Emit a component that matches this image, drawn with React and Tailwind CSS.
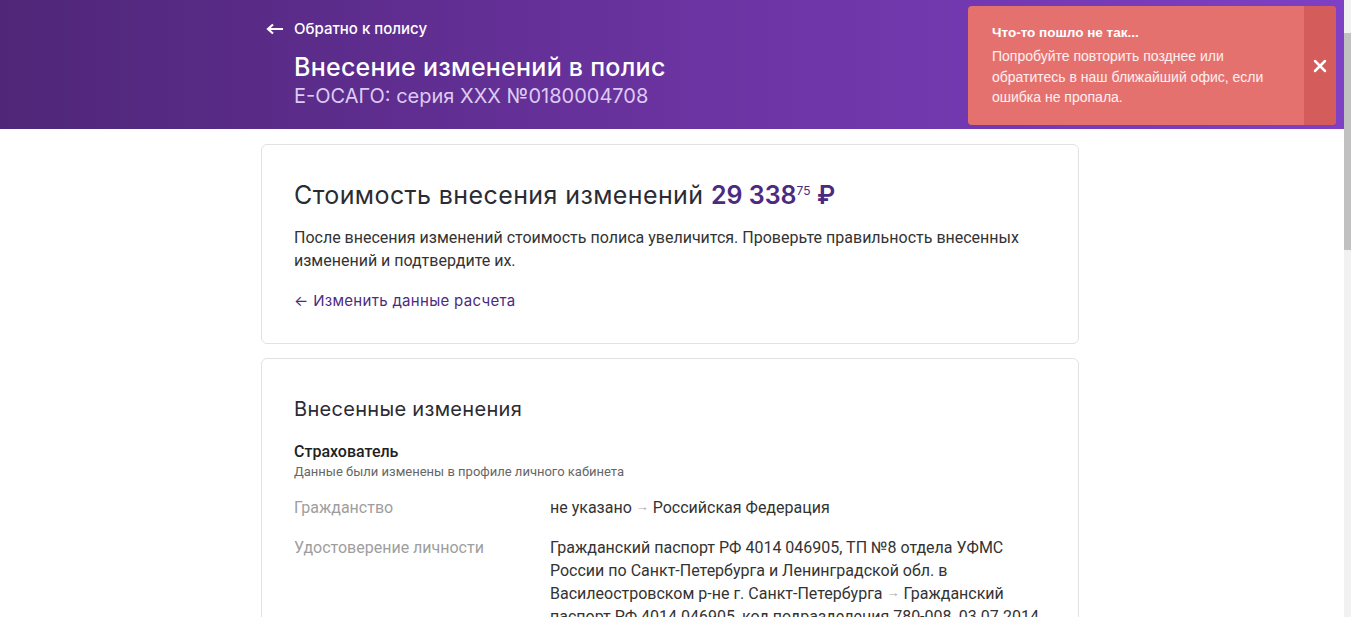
import { X } from "lucide-react";

const heading = { fontFamily: "Inter, 'Noto Sans', sans-serif" };

function Toast() {
  return (
    <div
      className="absolute top-[6px] right-[8px] w-[368px] h-[119px] flex rounded-[4px] overflow-hidden bg-[#e5716f] text-white"
      style={{ fontFamily: "'Liberation Sans', Arial, sans-serif" }}
    >
      <div className="flex-1 pl-[24px] pr-[22px] pt-[18px]">
        <p className="text-[13.5px] font-bold leading-[18px]">Что-то пошло не так...</p>
        <p className="mt-[4px] text-[14px] leading-[20.5px] text-white/90">
          Попробуйте повторить позднее или обратитесь в наш ближайший офис, если ошибка не пропала.
        </p>
      </div>
      <button className="w-[32px] bg-[#d45c5a] flex items-center justify-center">
        <X size={20} strokeWidth={3} />
      </button>
    </div>
  );
}

function Row({ label, children, top = "mt-[17px]" }) {
  return (
    <div className={`flex text-[16px] leading-[23px] ${top}`}>
      <div className="w-[256px] shrink-0 text-[#9e9e9e]">{label}</div>
      <div className="flex-1 text-[#333]">{children}</div>
    </div>
  );
}

const Arrow = () => (
  <span className="relative -top-[2px] text-[#a8a8a8] text-[13px] leading-none">→</span>
);

export default function App() {
  return (
    <div className="flex h-[617px] overflow-hidden bg-white" style={{ fontFamily: "Roboto, sans-serif" }}>
      <div className="relative flex-1">
        {/* header */}
        <div className="h-[129px] pr-[4px] bg-gradient-to-r from-[#4f2678] via-[#6a33a0] to-[#7e40c4]">
          <div className="w-[818px] mx-auto pt-[19px] pl-[5px] text-white" style={heading}>
            <div className="flex items-center gap-[10px] text-[15px] leading-[20px] font-medium">
              <svg width="18" height="12" viewBox="0 0 18 12" fill="none">
                <path d="M17 6H3M7 1.5L2 6l5 4.5" stroke="white" strokeWidth="2.2" />
              </svg>
              <span>Обратно к полису</span>
            </div>
            <h1 className="pl-[28px] mt-[13px] text-[25px] leading-[30px] font-medium tracking-[0.25px]">
              Внесение изменений в полис
            </h1>
            <p className="pl-[28px] mt-[1px] text-[20px] leading-[26px] text-[#dccbf2]">
              Е-ОСАГО: серия ХХХ №0180004708
            </p>
          </div>
        </div>

        <Toast />

        <div className="pr-[4px]">
          <div className="w-[818px] mx-auto pt-[15px]">
            {/* cost card */}
            <div className="border border-[#e2e2e2] rounded-[6px] px-[32px] pt-[34px] pb-[32px]">
              <h2 className="text-[25px] leading-[32px] tracking-[0.4px] text-[#2b2b33]" style={heading}>
                Стоимость внесения изменений{" "}
                <span className="font-semibold tracking-normal text-[#4b2b7f]">
                  29 338
                  <span className="relative -top-[9px] text-[12px] leading-none font-normal">75</span> ₽
                </span>
              </h2>
              <p className="mt-[15px] text-[16px] leading-[23px] text-[#333]">
                После внесения изменений стоимость полиса увеличится. Проверьте правильность внесенных
                изменений и подтвердите их.
              </p>
              <a className="block mt-[19px] text-[15px] leading-[20px] tracking-[0.3px] text-[#4b2b7f]" style={heading}>
                ← Изменить данные расчета
              </a>
            </div>

            {/* changes card */}
            <div className="mt-[14px] border border-[#e2e2e2] rounded-[6px] px-[32px] pt-[37px] pb-[32px]">
              <h3 className="text-[20px] leading-[26px] tracking-[0.3px] text-[#2b2b33]" style={heading}>
                Внесенные изменения
              </h3>
              <p className="mt-[20px] text-[16px] leading-[20px] font-medium text-[#222]">Страхователь</p>
              <p className="mt-[1px] text-[13px] leading-[18px] text-[#666]">
                Данные были изменены в профиле личного кабинета
              </p>
              <Row label="Гражданство" top="mt-[15px]">
                не указано <Arrow /> Российская Федерация
              </Row>
              <Row label="Удостоверение личности">
                Гражданский паспорт РФ 4014 046905, ТП №8 отдела УФМС России по Санкт-Петербурга и
                Ленинградской обл. в Василеостровском р-не г. Санкт-Петербурга <Arrow /> Гражданский
                паспорт РФ 4014 046905, код подразделения 780-008, 03.07.2014
              </Row>
            </div>
          </div>
        </div>
      </div>

      {/* scrollbar */}
      <div className="w-[7px] bg-[#f1f1f1] flex flex-col">
        <div className="h-[12px]" />
        <div className="mt-[21px] h-[217px] bg-[#c1c1c1]" />
      </div>
    </div>
  );
}
